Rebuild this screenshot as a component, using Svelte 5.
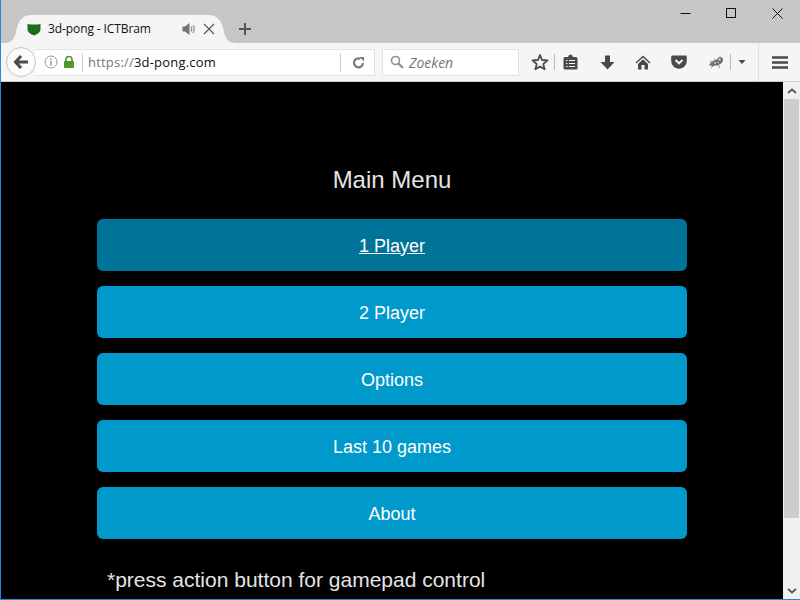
<script>
  const items = ['1 Player', '2 Player', 'Options', 'Last 10 games', 'About'];
</script>

<div class="window">
  <div class="titlebar">
    <div class="tab">
      <svg class="tabshape" width="234" height="28" viewBox="0 0 234 28"><path d="M0 28 C8 28 11 25 13 17 C15 6 19 0 29 0 H205 C215 0 219 6 221 17 C223 25 226 28 234 28 Z" fill="#f5f5f5"/></svg>
      <svg class="favicon" width="14" height="14" viewBox="0 0 14 14"><path d="M0.5 2 Q7 3 13.5 2 V7.5 Q13.5 11 7 13.5 Q0.5 11 0.5 7.5 Z" fill="#1d6b1d"/></svg>
      <span class="tabtitle">3d-pong - ICTBram</span>
      <svg class="speaker" width="14" height="14" viewBox="0 0 14 14"><path d="M0.5 4.5 H3 L7.5 1 V13 L3 9.5 H0.5 Z" fill="#757575"/><path d="M9 4.5 Q10.5 7 9 9.5 M11 3 Q13.5 7 11 11" fill="none" stroke="#8a8a8a" stroke-width="1.2"/></svg>
      <svg class="tabclose" width="12" height="12" viewBox="0 0 12 12"><path d="M1 1 L11 11 M11 1 L1 11" stroke="#555" stroke-width="1.1"/></svg>
    </div>
    <svg class="newtab" width="12" height="12" viewBox="0 0 12 12"><path d="M6 0 V12 M0 6 H12" stroke="#555" stroke-width="2"/></svg>
    <div class="spacer"></div>
    <div class="winctl">
      <svg width="11" height="11" viewBox="0 0 11 11"><path d="M0.5 5.5 H10.5" stroke="#111" stroke-width="1"/></svg>
      <svg width="11" height="11" viewBox="0 0 11 11"><rect x="0.5" y="0.5" width="9" height="9" fill="none" stroke="#111"/></svg>
      <svg width="11" height="11" viewBox="0 0 11 11"><path d="M0.5 0.5 L10.5 10.5 M10.5 0.5 L0.5 10.5" stroke="#111" stroke-width="1"/></svg>
    </div>
  </div>

  <div class="toolbar">
    <div class="back">
      <svg width="16" height="14" viewBox="0 0 16 14"><path d="M8 1 L2.5 7 L8 13 M3 7 H15" fill="none" stroke="#4a4a4a" stroke-width="3"/></svg>
    </div>
    <div class="urlbar">
      <svg class="info" width="14" height="14" viewBox="0 0 14 14"><circle cx="7" cy="7" r="6" fill="none" stroke="#999"/><path d="M7 6 V10.5 M7 3.5 V5" stroke="#888" stroke-width="1.4"/></svg>
      <svg class="lock" width="12" height="14" viewBox="0 0 12 14"><path d="M3 6 V4.5 a3 3 0 0 1 6 0 V6" fill="none" stroke="#4a9a2d" stroke-width="1.6"/><rect x="1" y="6" width="10" height="7" rx="1" fill="#4a9a2d"/></svg>
      <span class="sep"></span>
      <span class="url"><span class="scheme">https://</span>3d-pong.com</span>
      <span class="sep right"></span>
      <svg class="reload" width="13" height="13" viewBox="0 0 13 13"><path d="M11 7 A4.5 4.5 0 1 1 8.5 2.8" fill="none" stroke="#777" stroke-width="2.2"/><path d="M7.5 1 H12 V5.5 Z" fill="#777"/></svg>
    </div>
    <div class="search">
      <svg width="14" height="14" viewBox="0 0 14 14"><circle cx="5.5" cy="5.5" r="4" fill="none" stroke="#909090" stroke-width="1.6"/><path d="M8.5 8.5 L13 13" stroke="#909090" stroke-width="2.2"/></svg>
      <span>Zoeken</span>
    </div>
    <div class="tools">
      <svg class="i-star" width="18" height="18" viewBox="0 0 18 18"><path d="M9 2 L11 7 L16.5 7.4 L12.3 11 L13.6 16.3 L9 13.4 L4.4 16.3 L5.7 11 L1.5 7.4 L7 7 Z" fill="none" stroke="#4a4a4a" stroke-width="1.8" stroke-linejoin="round"/></svg>
      <span class="tsep first"></span>
      <svg class="i-list" width="15" height="16" viewBox="0 0 15 16"><path d="M2 3 H5 Q5.5 0.5 7.5 0.5 Q9.5 0.5 10 3 H13 Q14.5 3 14.5 4.5 V14 Q14.5 15.5 13 15.5 H2 Q0.5 15.5 0.5 14 V4.5 Q0.5 3 2 3 Z" fill="#4a4a4a"/><path d="M3 6.5 H4.5 M6 6.5 H12 M3 9.5 H4.5 M6 9.5 H12 M3 12.5 H4.5 M6 12.5 H12" stroke="#f5f5f5" stroke-width="1.2"/></svg>
      <svg class="i-down" width="15" height="15" viewBox="0 0 15 15"><path d="M5 0.5 H10 V7 H14.5 L7.5 14.5 L0.5 7 H5 Z" fill="#4a4a4a"/></svg>
      <svg class="i-home" width="16" height="15" viewBox="0 0 16 15"><path d="M8 0.5 L15.5 7.5 L14.6 8.5 L8 2.5 L1.4 8.5 L0.5 7.5 Z M3 9 L8 4.3 L13 9 V14.5 H9.5 V10 H6.5 V14.5 H3 Z" fill="#4a4a4a"/></svg>
      <svg class="i-pocket" width="16" height="14" viewBox="0 0 16 14"><path d="M1.5 0.5 H14.5 Q15.8 0.5 15.8 1.8 V6 A7.8 7.8 0 0 1 0.2 6 V1.8 Q0.2 0.5 1.5 0.5 Z" fill="#4a4a4a"/><path d="M4.5 5 L8 8.3 L11.5 5" fill="none" stroke="#f5f5f5" stroke-width="2"/></svg>
      <svg class="i-ext" width="16" height="13" viewBox="0 0 16 13"><path d="M1 9 Q4 4.5 8 4 Q10 1 13 1 Q15.5 2 15 5 Q13 9 8 9.5 Q4 10.5 1 9 Z" fill="#6f6f6f"/><path d="M3 12 L6 9 M6 3 L8 5 M10 9 L12 12 M2 5 L5 7 M12 0.5 L11 3" stroke="#777" stroke-width="0.9"/><circle cx="11.5" cy="3.5" r="1.1" fill="#e5e5e5"/><circle cx="7" cy="7" r="0.9" fill="#d5d5d5"/><circle cx="10" cy="6.5" r="0.7" fill="#d5d5d5"/></svg>
      <span class="tsep mid"></span>
      <svg class="i-caret" width="8" height="4" viewBox="0 0 8 4"><path d="M0.5 0 H7.5 L4 4 Z" fill="#4a4a4a"/></svg>
      <span class="tsep full"></span>
      <svg class="i-menu" width="16" height="13" viewBox="0 0 16 13"><path d="M0 1.5 H16 M0 6.5 H16 M0 11.5 H16" stroke="#4a4a4a" stroke-width="2.4"/></svg>
    </div>
  </div>

  <div class="viewport">
    <main class="page">
      <h1>Main Menu</h1>
      <nav class="menu">
        {#each items as item, i}
          <a href="#top" class="btn" class:active={i === 0}>{item}</a>
        {/each}
      </nav>
      <p class="note">*press action button for gamepad control</p>
    </main>
    <div class="scrollbar">
      <div class="sb-btn"><svg width="10" height="6" viewBox="0 0 10 6"><path d="M1 5 L5 1.5 L9 5" fill="none" stroke="#555" stroke-width="1.8"/></svg></div>
      <div class="thumb"></div>
      <div class="track"></div>
      <div class="sb-btn"><svg width="10" height="6" viewBox="0 0 10 6"><path d="M1 1 L5 4.5 L9 1" fill="none" stroke="#555" stroke-width="1.8"/></svg></div>
    </div>
  </div>
</div>

<style>
  :global(body) { margin: 0; }
  .window {
    width: 800px; height: 600px; box-sizing: border-box; overflow: hidden;
    display: flex; flex-direction: column;
    border-left: 1px solid #2a86d8; border-bottom: 1px solid #2a86d8;
    font-family: "Open Sans", "Noto Sans", sans-serif;
  }
  .titlebar {
    height: 43px; flex: none; background: #c6c6c6;
    display: flex; align-items: flex-end;
  }
  .tab {
    position: relative;
    width: 210px; height: 28px; margin-left: 16px; box-sizing: border-box;
    display: flex; align-items: center; padding: 0 10px;
  }
  .tabshape { position: absolute; left: -14px; top: 0; }
  .favicon, .tabtitle, .speaker, .tabclose { position: relative; }
  .favicon { margin-right: 7px; flex: none; }
  .tabtitle { font-size: 12px; color: #111; white-space: nowrap; width: 117px; margin-top: -1px; font-family: "Open Sans", sans-serif; letter-spacing: -0.1px; }
  .speaker { margin-left: 17px; flex: none; }
  .tabclose { margin-left: 7px; flex: none; }
  .newtab { margin: 0 0 8px 12px; }
  .spacer { flex: 1; }
  .winctl { display: flex; align-self: flex-start; gap: 35px; padding: 8px 17px 0 0; }
  .toolbar {
    height: 39px; flex: none; box-sizing: border-box; background: #f5f5f5;
    border-bottom: 1px solid #cfcfcf; display: flex; align-items: center; padding-left: 5px;
  }
  .back {
    width: 30px; height: 30px; box-sizing: border-box; border: 1px solid #c4c4c4; border-radius: 50%;
    background: #fbfbfb; display: flex; align-items: center; justify-content: center; flex: none; z-index: 1;
  }
  .urlbar {
    width: 340px; height: 27px; margin-left: -1px; box-sizing: border-box; background: #fff;
    border: 1px solid #e3e3e3; border-left: none;
    display: flex; align-items: center; padding-left: 9px;
  }
  .info { flex: none; }
  .lock { margin-left: 5px; flex: none; }
  .sep { width: 1px; height: 19px; background: #ccc; margin-left: 7px; flex: none; }
  .url { font-size: 13px; color: #111; margin-left: 5px; width: 252px; font-family: "Open Sans", sans-serif; letter-spacing: 0.2px; white-space: nowrap; }
  .scheme { color: #777; }
  .sep.right { margin-left: 0; }
  .reload { margin-left: 11px; flex: none; }
  .search {
    width: 137px; height: 27px; margin-left: 7px; box-sizing: border-box; background: #fff;
    border: 1px solid #e3e3e3; display: flex; align-items: center; padding-left: 7px; gap: 5px;
    font-size: 14px; font-style: italic; color: #777; flex: none;
  }
  .tools { display: flex; align-items: center; flex: none; }
  .i-star { margin-left: 12px; }
  .tsep { width: 1px; height: 16px; background: #bbb; flex: none; }
  .tsep.first { margin-left: 5px; }
  .i-list { margin-left: 8px; }
  .i-down { margin-left: 22px; }
  .i-home { margin-left: 20px; }
  .i-pocket { margin-left: 20px; }
  .i-ext { margin-left: 21px; }
  .tsep.mid { margin-left: 6px; }
  .i-caret { margin-left: 7px; }
  .tsep.full { height: 38px; margin-left: 12px; background: #e2e2e2; }
  .i-menu { margin-left: 13px; }
  .viewport { flex: 1; min-height: 0; display: flex; background: #000; }
  .page { flex: 1; min-width: 0; box-sizing: border-box; padding: 84px 96px 0; color: #e4e4e4; font-family: "Liberation Sans", Arial, sans-serif; }
  h1 { margin: 0 0 25px; font-size: 24px; font-weight: 400; line-height: 28px; text-align: center; }
  .menu { display: flex; flex-direction: column; gap: 15px; }
  .btn {
    height: 52px; box-sizing: border-box; padding-top: 2px; border-radius: 6px; background: #0099cc; color: #fff;
    display: flex; align-items: center; justify-content: center;
    font-size: 18px; text-decoration: none;
  }
  .btn.active { background: #007399; text-decoration: underline; }
  .note { margin: 28px 0 0 10px; font-size: 21px; line-height: 25px; white-space: nowrap; }
  .scrollbar { width: 17px; flex: none; background: #f0f0f0; display: flex; flex-direction: column; }
  .sb-btn { height: 17px; display: flex; align-items: center; justify-content: center; flex: none; }
  .thumb { height: 419px; background: #cdcdcd; flex: none; margin: 0 1px; }
  .track { flex: 1; }
</style>
